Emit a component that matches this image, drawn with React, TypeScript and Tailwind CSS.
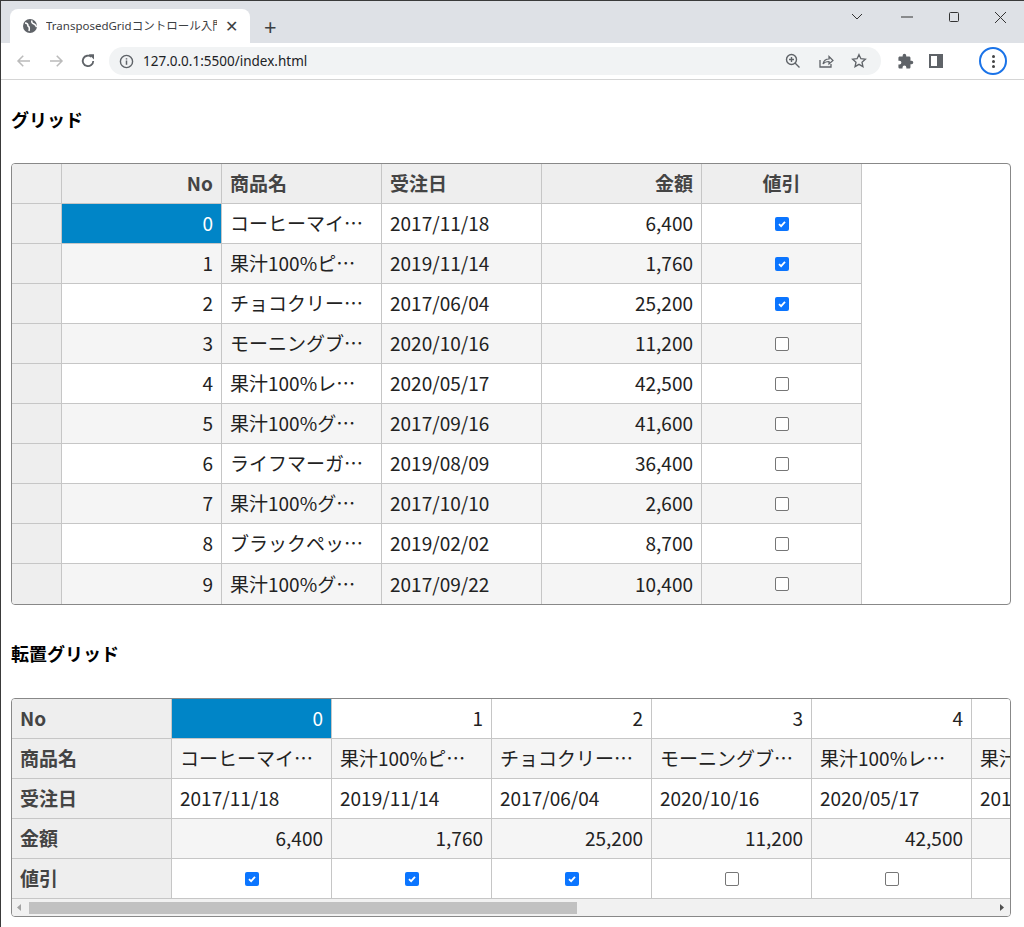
import React from "react";

const rows = [
  [0, "コーヒーマイ…", "2017/11/18", "6,400", true],
  [1, "果汁100%ピ…", "2019/11/14", "1,760", true],
  [2, "チョコクリー…", "2017/06/04", "25,200", true],
  [3, "モーニングブ…", "2020/10/16", "11,200", false],
  [4, "果汁100%レ…", "2020/05/17", "42,500", false],
  [5, "果汁100%グ…", "2017/09/16", "41,600", false],
  [6, "ライフマーガ…", "2019/08/09", "36,400", false],
  [7, "果汁100%グ…", "2017/10/10", "2,600", false],
  [8, "ブラックペッ…", "2019/02/02", "8,700", false],
  [9, "果汁100%グ…", "2017/09/22", "10,400", false],
] as [number, string, string, string, boolean][];

const F = { fontFamily: '"Noto Sans CJK JP", "Noto Sans", sans-serif' };

function Check({ on }: { on: boolean }) {
  return on ? (
    <span className="inline-flex w-[14px] h-[14px] rounded-[2px] bg-[#0b75ff] items-center justify-center">
      <svg width="10" height="10" viewBox="0 0 10 10"><path d="M2 5.2 L4.1 7.2 L8 2.8" stroke="white" strokeWidth="1.8" fill="none" /></svg>
    </span>
  ) : (
    <span className="inline-block w-[14px] h-[14px] rounded-[2px] border border-[#767676] bg-white" />
  );
}

const cell = "h-10 border-r border-b border-[#c6c6c6] flex items-center px-2 overflow-hidden whitespace-nowrap text-[19px] text-[#222] shrink-0";

export default function App() {
  return (
    <div className="w-[1024px] h-[927px] bg-white border-l border-t border-[#3a3a3a] overflow-hidden" style={{ fontFamily: '"Noto Sans", "Noto Sans CJK JP", sans-serif' }}>
      <div className="h-[42px] bg-[#dee1e6] flex items-end pl-[9px] relative">
        <div className="w-[240px] h-[34px] bg-white rounded-t-[8px] flex items-center px-3 gap-2">
          <svg width="16" height="16" viewBox="0 0 16 16"><circle cx="8" cy="8" r="7" fill="#5f6368" /><path d="M3 5 Q6 5 6 8 Q8 9 7 13 M10 2.5 Q9 5 12 6 Q14 7 14.5 9" stroke="white" strokeWidth="1.5" fill="none" /></svg>
          <span className="text-[11.5px] text-[#3c4043] flex-1 whitespace-nowrap overflow-hidden">TransposedGridコントロール入門</span>
          <span className="text-[16px] text-[#3c4043]">✕</span>
        </div>
        <span className="ml-[14px] mb-[6px] text-[22px] text-[#3c4043] leading-none">+</span>
        <div className="absolute right-0 top-0 h-[32px] flex items-center text-[#333]">
          <svg className="mr-[38px]" width="12" height="8" viewBox="0 0 12 8"><path d="M1 1 L6 6 L11 1" stroke="#333" fill="none" /></svg>
          <svg className="mr-[36px]" width="12" height="2" viewBox="0 0 12 2"><path d="M0 1 H12" stroke="#333" /></svg>
          <svg className="mr-[36px]" width="10" height="10" viewBox="0 0 10 10"><rect x="0.5" y="0.5" width="9" height="9" rx="1" stroke="#333" fill="none" /></svg>
          <svg className="mr-[18px]" width="11" height="11" viewBox="0 0 11 11"><path d="M0 0 L11 11 M11 0 L0 11" stroke="#333" /></svg>
        </div>
      </div>
      <div className="h-[37px] bg-white border-b border-[#d5d5d5] flex items-center pl-[14px]">
        <svg width="18" height="18" viewBox="0 0 24 24"><path d="M20 12H5 M11 5 L4 12 L11 19" stroke="#bbb" strokeWidth="2" fill="none" /></svg>
        <svg className="ml-[14px]" width="18" height="18" viewBox="0 0 24 24"><path d="M4 12H19 M13 5 L20 12 L13 19" stroke="#bbb" strokeWidth="2" fill="none" /></svg>
        <svg className="ml-[14px]" width="18" height="18" viewBox="0 0 24 24"><path d="M19 12 A7 7 0 1 1 16.5 6.5" stroke="#5f6368" strokeWidth="2.4" fill="none" /><path d="M13 3 H20 V10 Z" fill="#5f6368" /></svg>
        <div className="ml-[12px] w-[772px] h-[28px] rounded-full bg-[#f1f3f4] flex items-center pl-[10px] pr-[14px]">
          <svg width="15" height="15" viewBox="0 0 16 16"><circle cx="8" cy="8" r="6.5" stroke="#5f6368" strokeWidth="1.5" fill="none" /><path d="M8 7 V11.5 M8 4.5 V5.8" stroke="#5f6368" strokeWidth="1.6" /></svg>
          <span className="ml-[9px] text-[13.5px] text-[#202124] flex-1">127.0.0.1:5500/index.html</span>
          <svg width="16" height="16" viewBox="0 0 16 16"><circle cx="6.5" cy="6.5" r="5" stroke="#5f6368" strokeWidth="1.4" fill="none" /><path d="M10 10 L14.5 14.5 M4 6.5 H9 M6.5 4 V9" stroke="#5f6368" strokeWidth="1.4" /></svg>
          <svg className="ml-[17px]" width="16" height="16" viewBox="0 0 16 16"><path d="M2 7 V14 H13 V11" stroke="#5f6368" strokeWidth="1.3" fill="none" /><path d="M5 11 Q6 6 11 6 V3.5 L15 7.5 L11 11 V8.5 Q7 8.5 5 11 Z" stroke="#5f6368" strokeWidth="1.2" fill="none" /></svg>
          <svg className="ml-[17px]" width="16" height="16" viewBox="0 0 24 24"><path d="M12 2.5 L14.9 8.6 L21.5 9.3 L16.5 13.8 L17.9 20.4 L12 17 L6.1 20.4 L7.5 13.8 L2.5 9.3 L9.1 8.6 Z" stroke="#5f6368" strokeWidth="2" fill="none" /></svg>
        </div>
        <svg className="ml-[16px]" width="17" height="17" viewBox="0 0 24 24"><path d="M20.5 11H19V7c0-1.1-.9-2-2-2h-4V3.5a2.5 2.5 0 0 0-5 0V5H4c-1.1 0-2 .9-2 2v3.8h1.5a2.7 2.7 0 0 1 0 5.4H2V20c0 1.1.9 2 2 2h3.8v-1.5a2.7 2.7 0 0 1 5.4 0V22H17c1.1 0 2-.9 2-2v-4h1.5a2.5 2.5 0 0 0 0-5z" fill="#5f6368" /></svg>
        <svg className="ml-[15px]" width="14" height="14" viewBox="0 0 14 14"><rect x="1" y="1" width="12" height="12" stroke="#5f6368" strokeWidth="2" fill="none" /><rect x="8" y="1" width="5" height="12" fill="#5f6368" /></svg>
        <div className="ml-[36px] w-[28px] h-[28px] rounded-full border-2 border-[#1a73e8] flex flex-col items-center justify-center gap-[2px]">
          <span className="w-[3px] h-[3px] rounded-full bg-[#444]" /><span className="w-[3px] h-[3px] rounded-full bg-[#444]" /><span className="w-[3px] h-[3px] rounded-full bg-[#444]" />
        </div>
      </div>

      <div className="px-[10px]" style={F}>
        <h2 className="text-[18px] font-bold text-black mt-[27px] mb-[32px] leading-[24px]">グリッド</h2>
        <div className="w-[1000px] border border-[#888] rounded-[4px] overflow-hidden">
          <div className="flex">
            <div className={cell + " w-[50px] bg-[#eee]"} />
            <div className={cell + " w-[160px] bg-[#eee] justify-end font-bold text-[#444]"}>No</div>
            <div className={cell + " w-[160px] bg-[#eee] font-bold text-[#444]"}>商品名</div>
            <div className={cell + " w-[160px] bg-[#eee] font-bold text-[#444]"}>受注日</div>
            <div className={cell + " w-[160px] bg-[#eee] justify-end font-bold text-[#444]"}>金額</div>
            <div className={cell + " w-[160px] bg-[#eee] justify-center font-bold text-[#444]"}>値引</div>
          </div>
          {rows.map((r, i) => {
            const bg = i % 2 ? "bg-[#f5f5f5]" : "bg-white";
            const last = i === 9 ? " border-b-0" : "";
            return (
              <div className="flex" key={i}>
                <div className={cell + " w-[50px] bg-[#eee]" + last} />
                <div className={cell + " w-[160px] justify-end " + (i === 0 ? "bg-[#0085c7] !text-white" : bg) + last}>{r[0]}</div>
                <div className={cell + " w-[160px] " + bg + last}>{r[1]}</div>
                <div className={cell + " w-[160px] " + bg + last}>{r[2]}</div>
                <div className={cell + " w-[160px] justify-end " + bg + last}>{r[3]}</div>
                <div className={cell + " w-[160px] justify-center " + bg + last}><Check on={r[4]} /></div>
              </div>
            );
          })}
        </div>

        <h2 className="text-[18px] font-bold text-black mt-[36px] mb-[33px] leading-[24px]">転置グリッド</h2>
        <div className="w-[1000px] border border-[#888] rounded-[4px] overflow-hidden">
          {(["No", "商品名", "受注日", "金額", "値引"] as const).map((h, ri) => {
            const bg = ri % 2 ? "bg-[#f5f5f5]" : "bg-white";
            return (
              <div className="flex" key={h}>
                <div className={cell + " w-[160px] bg-[#eee] font-bold text-[#444]"}>{h}</div>
                {rows.slice(0, 6).map((r, ci) => {
                  const cls = ri === 0 ? "justify-end " + (ci === 0 ? "bg-[#0085c7] !text-white" : bg)
                    : ri === 3 ? "justify-end " + bg
                    : ri === 4 ? "justify-center " + bg : bg;
                  const val = ri === 0 ? r[0] : ri === 1 ? r[1] : ri === 2 ? r[2] : ri === 3 ? r[3] : <Check on={r[4]} />;
                  return <div key={ci} className={cell + " w-[160px] " + cls}>{val}</div>;
                })}
              </div>
            );
          })}
          <div className="h-[17px] bg-[#f1f1f1] flex items-center">
            <svg className="ml-[5px]" width="4" height="7" viewBox="0 0 4 7"><path d="M4 0 L0 3.5 L4 7 Z" fill="#a3a3a3" /></svg>
            <div className="ml-[8px] w-[548px] h-[12px] bg-[#c1c1c1]" />
            <div className="flex-1" />
            <svg className="mr-[6px]" width="4" height="7" viewBox="0 0 4 7"><path d="M0 0 L4 3.5 L0 7 Z" fill="#505050" /></svg>
          </div>
        </div>
      </div>
    </div>
  );
}
